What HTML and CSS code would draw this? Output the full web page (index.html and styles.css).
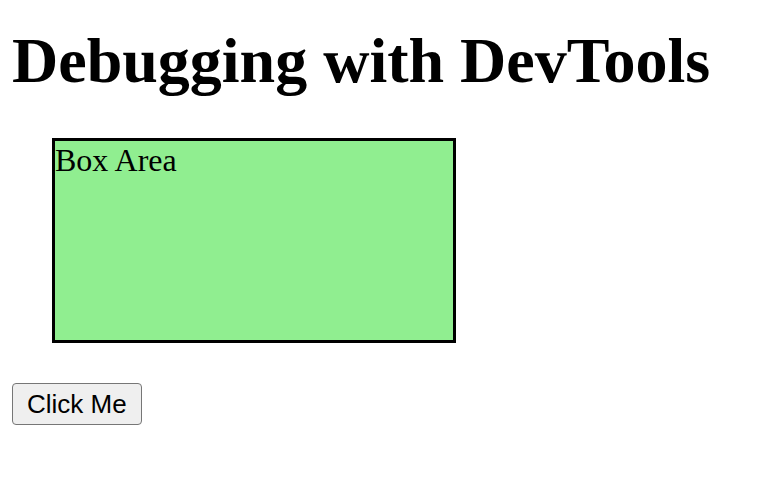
FILE: index.html
```html
<!DOCTYPE html>
<html lang="en">
<head>
<meta charset="utf-8">
<title>Debugging with DevTools</title>
<link rel="stylesheet" href="styles.css">
</head>
<body>
<h1 class="title">Debugging with DevTools</h1>
<div class="box">Box Area</div>
<button class="action" type="button">Click Me</button>
</body>
</html>
```
FILE: styles.css
```css
body {
  margin: 24px 12px;
  background: #fff;
  color: #000;
  font-family: "Liberation Serif", "Times New Roman", serif;
  font-size: 32px;
}

.title {
  margin: 0 0 40px;
  font-size: 64px;
  line-height: 74px;
}

.box {
  box-sizing: border-box;
  width: 404px;
  max-width: calc(100% - 40px);
  min-height: 205px;
  margin: 0 0 40px 40px;
  border: 3px solid #000;
  background: lightgreen;
  line-height: 38px;
}

.action {
  display: block;
  padding: 5px 14px;
  border: 1px solid #767676;
  border-radius: 4px;
  background: #efefef;
  color: #000;
  font-family: "Liberation Sans", Arial, sans-serif;
  font-size: 26px;
  line-height: 30px;
}
```
